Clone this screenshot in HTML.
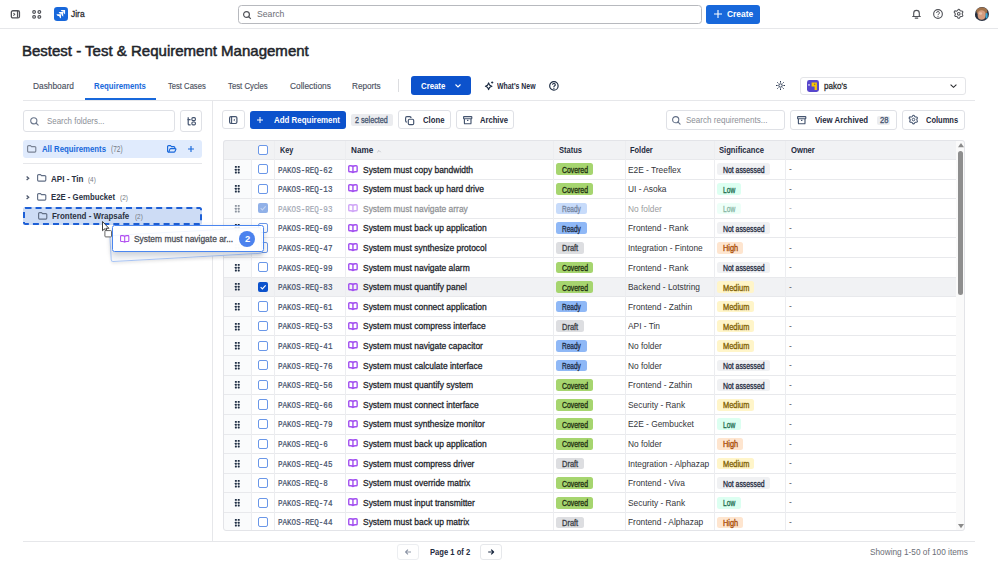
<!DOCTYPE html>
<html><head><meta charset="utf-8">
<style>
*{box-sizing:border-box;margin:0;padding:0}
html,body{width:998px;height:585px;overflow:hidden;background:#fff}
body{position:relative;font-family:"Liberation Sans",sans-serif;color:#292a2e}
.a{position:absolute}
.t{position:absolute;white-space:nowrap;line-height:1}
svg{position:absolute;overflow:visible}
.btn{position:absolute;border:1px solid #dfe1e6;border-radius:3px;background:#fff}
</style></head><body>
<div class="a" style="left:0;top:28px;width:998px;height:1px;background:#e6e7ea"></div>
<svg style="left:10px;top:10px" width="11" height="9" viewBox="0 0 11 9"><rect x="1.35" y=".75" width="8.1" height="7.2" rx="1.5" fill="none" stroke="#505258" stroke-width="1.3"/><path d="M7.5 1v6.7" stroke="#505258" stroke-width="1.15"/><path d="M3.4 3l1.35 1.35L3.4 5.7" fill="none" stroke="#505258" stroke-width="1.05"/></svg>
<svg style="left:32px;top:10px" width="9.5" height="9" viewBox="0 0 9.5 9"><g fill="none" stroke="#505258" stroke-width="1.2"><rect x=".75" y=".7" width="2.7" height="2.6" rx="1.2"/><rect x="6" y=".7" width="2.7" height="2.6" rx="1.2"/><rect x=".75" y="5.6" width="2.7" height="2.6" rx="1.2"/><rect x="6" y="5.6" width="2.7" height="2.6" rx="1.2"/></g></svg>
<svg style="left:53.7px;top:7.2px" width="14" height="14" viewBox="0 0 14 14"><rect width="14" height="14" rx="3.2" fill="#1868db"/><g fill="#fff"><path d="M6.6 2.9h4.5v4.6L9.4 5.8V4.6H7.9z"/><path d="M4.6 5.05h4.6v4.75L7.5 8.1V6.75H5.9z"/><path d="M2.4 7.2h4.6v4.4L5.3 9.9V8.9H3.7z"/></g></svg>
<div class="t" id="t0" style="left:71.30px;top:10.00px;font-size:9.2px;color:#292a2e;-webkit-text-stroke:0.28px #292a2e;transform:scaleX(0.9175);transform-origin:0.00px 0">Jira</div>
<div class="a" style="left:238px;top:5px;width:463.5px;height:18.5px;border:1px solid #b7b9be;border-radius:3.5px"></div>
<svg style="left:243px;top:10.5px" width="8.5" height="8" viewBox="0 0 8.5 8"><circle cx="3.5" cy="3.5" r="2.9" fill="none" stroke="#505258" stroke-width="1.2"/><path d="M5.6 5.6l2.2 2.2" stroke="#505258" stroke-width="1.2"/></svg>
<div class="t" id="t1" style="left:256.80px;top:10.00px;font-size:9.2px;color:#6b6e76;transform:scaleX(0.9414);transform-origin:0.00px 0">Search</div>
<div class="a" style="left:706px;top:4.5px;width:54px;height:19px;background:#1868db;border-radius:3px"></div>
<svg style="left:714px;top:10px" width="8" height="8" viewBox="0 0 8 8"><path d="M4 0v8M0 4h8" stroke="#fff" stroke-width="1.1"/></svg>
<div class="t" id="t2" style="left:727.00px;top:10.00px;font-size:9.2px;color:#fff;font-weight:bold;transform:scaleX(0.9126);transform-origin:0.00px 0">Create</div>
<svg style="left:912px;top:9px" width="9" height="10" viewBox="0 0 9 10"><path d="M.7 7.5h7.6M1.7 7.4V4.2a2.8 2.8 0 0 1 5.6 0v3.2M3.2 9.1h2.6" fill="none" stroke="#505258" stroke-width="1.15" stroke-linejoin="round" stroke-linecap="round"/></svg>
<svg style="left:932.5px;top:9px" width="10" height="10" viewBox="0 0 10 10"><circle cx="5" cy="5" r="4.35" fill="none" stroke="#505258" stroke-width="1.1"/><path d="M3.6 3.9a1.4 1.4 0 1 1 1.9 1.3c-.4.2-.5.4-.5.9" fill="none" stroke="#505258" stroke-width="1"/><circle cx="5" cy="7.3" r=".6" fill="#505258"/></svg>
<svg style="left:954px;top:9.4px" width="9.5" height="9.6" viewBox="0 0 9 9.2"><path d="M3.6.85a1 1 0 0 1 1.8 0l.35.6a1 1 0 0 0 .9.5h.7a1 1 0 0 1 .9 1.55l-.35.6a1 1 0 0 0 0 1l.35.6a1 1 0 0 1-.9 1.55h-.7a1 1 0 0 0-.9.5l-.35.6a1 1 0 0 1-1.8 0l-.35-.6a1 1 0 0 0-.9-.5h-.7A1 1 0 0 1 .75 6.1l.35-.6a1 1 0 0 0 0-1l-.35-.6A1 1 0 0 1 1.65 2h.7a1 1 0 0 0 .9-.5z" fill="none" stroke="#505258" stroke-width="1.05" stroke-linejoin="round"/><circle cx="4.5" cy="4.6" r="1.3" fill="none" stroke="#505258" stroke-width="1"/></svg>
<div class="a" style="left:974.7px;top:7px;width:14px;height:14px;border-radius:50%;overflow:hidden"><svg style="left:0;top:0" width="14" height="14" viewBox="0 0 14 14"><rect width="14" height="14" fill="#2b3242"/><ellipse cx="6.8" cy="4" rx="5.6" ry="3.8" fill="#a0724a"/><ellipse cx="6.6" cy="8" rx="4.2" ry="4.8" fill="#d49c7e"/><ellipse cx="5.6" cy="6.5" rx="1.6" ry="1.2" fill="#e8c0a8"/><rect x="10.6" y="6" width="2" height="5.5" rx="1" fill="#35a6d6"/><rect x="0" y="7" width="2.4" height="5" fill="#262c3a"/></svg></div>
<div class="t" id="t3" style="left:22.00px;top:44.00px;font-size:14.5px;color:#22252b;-webkit-text-stroke:0.28px #22252b;transform:scaleX(1.0354);transform-origin:1.00px 0;-webkit-text-stroke:0.5px #22252b">Bestest - Test &amp; Requirement Management</div>
<div class="a" style="left:23px;top:99.5px;width:952px;height:1px;background:#e6e7ea"></div>
<div class="t" id="t4" style="left:32.50px;top:81.00px;font-size:9.4px;color:#4b5160;transform:scaleX(0.8894);transform-origin:0.00px 0;-webkit-text-stroke:0.15px #4b5160">Dashboard</div>
<div class="t" id="t5" style="left:94.40px;top:82.00px;font-size:8.9px;color:#1868db;font-weight:bold;transform:scaleX(0.8777);transform-origin:0.00px 0">Requirements</div>
<div class="a" style="left:85px;top:98px;width:71px;height:2px;background:#1868db"></div>
<div class="t" id="t6" style="left:167.60px;top:81.00px;font-size:9.4px;color:#4b5160;transform:scaleX(0.8140);transform-origin:0.00px 0;-webkit-text-stroke:0.15px #4b5160">Test Cases</div>
<div class="t" id="t7" style="left:228.00px;top:81.00px;font-size:9.4px;color:#4b5160;transform:scaleX(0.8292);transform-origin:0.00px 0;-webkit-text-stroke:0.15px #4b5160">Test Cycles</div>
<div class="t" id="t8" style="left:289.60px;top:81.00px;font-size:9.4px;color:#4b5160;transform:scaleX(0.8924);transform-origin:0.00px 0;-webkit-text-stroke:0.15px #4b5160">Collections</div>
<div class="t" id="t9" style="left:352.40px;top:81.00px;font-size:9.4px;color:#4b5160;transform:scaleX(0.8751);transform-origin:0.00px 0;-webkit-text-stroke:0.15px #4b5160">Reports</div>
<div class="a" style="left:398px;top:79px;width:1px;height:13px;background:#dcdde0"></div>
<div class="a" style="left:411.2px;top:76px;width:59.8px;height:19px;background:#0c52cc;border-radius:3px"></div>
<div class="t" id="t10" style="left:420.80px;top:82.00px;font-size:9.2px;color:#fff;font-weight:bold;transform:scaleX(0.8494);transform-origin:0.00px 0">Create</div>
<svg style="left:455px;top:83.5px" width="6" height="4" viewBox="0 0 6 4"><path d="M.5.5L3 3 5.5.5" fill="none" stroke="#fff" stroke-width="1.1"/></svg>
<svg style="left:485px;top:81px" width="9" height="9" viewBox="0 0 9 9"><path d="M3.6 1.9Q4.1 4.7 6.9 5.3 4.1 5.9 3.6 8.6 3.1 5.9.4 5.3 3.1 4.7 3.6 1.9z" fill="none" stroke="#1c2b42" stroke-width="1.1" stroke-linejoin="round"/><path d="M7.2.4v2.2M6.1 1.5h2.2" stroke="#1c2b42" stroke-width=".9"/></svg>
<div class="t" id="t11" style="left:497.40px;top:82.00px;font-size:8.9px;color:#1f2b40;font-weight:bold;transform:scaleX(0.7791);transform-origin:0.00px 0">What&#x27;s New</div>
<svg style="left:549.3px;top:80.6px" width="9.8" height="9.8" viewBox="0 0 10 10"><circle cx="5" cy="5" r="4.3" fill="none" stroke="#1c2b42" stroke-width="1.2"/><path d="M3.6 3.9a1.4 1.4 0 1 1 1.9 1.3c-.4.2-.5.4-.5.9" fill="none" stroke="#1c2b42" stroke-width="1.1"/><circle cx="5" cy="7.4" r=".65" fill="#1c2b42"/></svg>
<svg style="left:775.8px;top:81.2px" width="9" height="9" viewBox="0 0 9 9"><circle cx="4.5" cy="4.5" r="1.7" fill="none" stroke="#2c3a52" stroke-width="1"/><path d="M4.5 0v1.6M4.5 7.4V9M0 4.5h1.6M7.4 4.5H9M1.3 1.3l1.1 1.1M6.6 6.6l1.1 1.1M1.3 7.7l1.1-1.1M6.6 2.4l1.1-1.1" stroke="#2c3a52" stroke-width="1"/></svg>
<div class="btn" style="left:799.6px;top:76.5px;width:166px;height:18.5px;border-color:#e4e5e8"></div>
<svg style="left:807.1px;top:79.6px" width="12" height="11.9" viewBox="0 0 12 11.9"><rect width="12" height="11.9" rx="2.4" fill="#5746cc"/><path d="M4.6 2.6h5.3v7.4H7.6V6.4h-3z" fill="#fbc500"/><circle cx="7.6" cy="4.4" r=".8" fill="#8a8040"/><ellipse cx="2" cy="4.9" rx="1" ry=".7" fill="#fff"/></svg>
<div class="t" id="t12" style="left:823.80px;top:81.00px;font-size:9.6px;color:#292a2e;-webkit-text-stroke:0.28px #292a2e;transform:scaleX(0.8395);transform-origin:0.00px 0">pako&#x27;s</div>
<svg style="left:950px;top:83.5px" width="7" height="4" viewBox="0 0 7 4"><path d="M.6.6L3.5 3.3 6.4.6" fill="none" stroke="#292a2e" stroke-width="1.1"/></svg>
<div class="a" style="left:212px;top:100px;width:1px;height:441px;background:#e6e7ea"></div>
<div class="btn" style="left:22.6px;top:110.4px;width:152.4px;height:22px"></div>
<svg style="left:30px;top:117px" width="9" height="9" viewBox="0 0 9 9"><circle cx="3.8" cy="3.8" r="3.1" fill="none" stroke="#6b778c" stroke-width="1.1"/><path d="M6 6l2.2 2.2" stroke="#6b778c" stroke-width="1.1" stroke-linecap="round"/></svg>
<div class="t" id="t13" style="left:47.00px;top:117.00px;font-size:9.2px;color:#8c8f97;transform:scaleX(0.8592);transform-origin:0.00px 0">Search folders...</div>
<div class="btn" style="left:180px;top:110.4px;width:22.4px;height:22px"></div>
<svg style="left:186.9px;top:117.1px" width="9" height="8.6" viewBox="0 0 9 8.6"><path d="M1.2 .3v6.6a1 1 0 0 0 1 1h1.4M.3 2.6h3.3" fill="none" stroke="#44546f" stroke-width="1.2"/><rect x="4.9" y=".7" width="3.5" height="2.9" rx="1.1" fill="none" stroke="#44546f" stroke-width="1.15"/><rect x="4.9" y="5" width="3.5" height="2.9" rx="1.1" fill="none" stroke="#44546f" stroke-width="1.15"/></svg>
<div class="a" style="left:22.6px;top:139.6px;width:179.8px;height:18.8px;background:#e0ebfd;border-radius:3px"></div>
<svg style="left:27.4px;top:145.1px" width="9.4" height="7.7" viewBox="0 0 9.4 7.7"><path d="M.6 1.6A1 1 0 0 1 1.6.6h1.9l1 1h3.3a1 1 0 0 1 1 1v3.5a1 1 0 0 1-1 1H1.6a1 1 0 0 1-1-1z" fill="none" stroke="#7a8496" stroke-width="1.15" stroke-linejoin="round"/></svg>
<svg style="left:167px;top:145px" width="9.4" height="7.8" viewBox="0 0 9.4 7.8"><path d="M1.6 7.2A1 1 0 0 1 .6 6.2V1.6a1 1 0 0 1 1-1h1.9l1 1h2.3a1 1 0 0 1 1 1v.6" fill="none" stroke="#1868db" stroke-width="1.15" stroke-linejoin="round"/><path d="M1.6 7.2l1.3-3.1a.8.8 0 0 1 .75-.5H8.3a.6.6 0 0 1 .55.85L7.8 6.7a.9.9 0 0 1-.8.5z" fill="none" stroke="#1868db" stroke-width="1.15" stroke-linejoin="round"/></svg>
<svg style="left:187.9px;top:146px" width="6" height="6" viewBox="0 0 6 6"><path d="M3 0v6M0 3h6" stroke="#1868db" stroke-width="1.15"/></svg>
<div class="t" id="t14" style="left:41.60px;top:145.00px;font-size:9.0px;color:#1868db;font-weight:bold;transform:scaleX(0.8647);transform-origin:0.00px 0">All Requirements</div>
<div class="t" id="t15" style="left:110.60px;top:146.00px;font-size:8.2px;color:#757983;transform:scaleX(0.7955);transform-origin:0.00px 0">(72)</div>
<div class="a" style="left:22.6px;top:163.2px;width:179.8px;height:1px;background:#e6e7ea"></div>
<svg style="left:26px;top:176.3px" width="3.2" height="4.6" viewBox="0 0 3.2 4.6"><path d="M.6.5l2.1 1.8-2.1 1.8" fill="none" stroke="#505a6e" stroke-width="1.3"/></svg>
<svg style="left:37px;top:174.3px" width="9.4" height="7.7" viewBox="0 0 9.4 7.7"><path d="M.6 1.6A1 1 0 0 1 1.6.6h1.9l1 1h3.3a1 1 0 0 1 1 1v3.5a1 1 0 0 1-1 1H1.6a1 1 0 0 1-1-1z" fill="none" stroke="#626f86" stroke-width="1.15" stroke-linejoin="round"/></svg>
<div class="t" id="t16" style="left:51.00px;top:175.00px;font-size:9.0px;color:#2a3142;font-weight:bold;transform:scaleX(0.8929);transform-origin:0.00px 0">API - Tin</div>
<div class="t" id="t17" style="left:88.00px;top:176.00px;font-size:8.0px;color:#757983;transform:scaleX(0.7910);transform-origin:0.00px 0">(4)</div>
<svg style="left:26px;top:195px" width="3.2" height="4.6" viewBox="0 0 3.2 4.6"><path d="M.6.5l2.1 1.8-2.1 1.8" fill="none" stroke="#505a6e" stroke-width="1.3"/></svg>
<svg style="left:37px;top:193.2px" width="9.4" height="7.7" viewBox="0 0 9.4 7.7"><path d="M.6 1.6A1 1 0 0 1 1.6.6h1.9l1 1h3.3a1 1 0 0 1 1 1v3.5a1 1 0 0 1-1 1H1.6a1 1 0 0 1-1-1z" fill="none" stroke="#626f86" stroke-width="1.15" stroke-linejoin="round"/></svg>
<div class="t" id="t18" style="left:51.00px;top:193.00px;font-size:9.0px;color:#2a3142;font-weight:bold;transform:scaleX(0.8645);transform-origin:0.00px 0">E2E - Gembucket</div>
<div class="t" id="t19" style="left:119.60px;top:194.00px;font-size:8.0px;color:#757983;transform:scaleX(0.8108);transform-origin:0.00px 0">(2)</div>
<div class="a" style="left:23px;top:207.4px;width:179.4px;height:17.6px;background:#cddcf5;border:2px dashed #1d5fd6;border-radius:2.5px"></div>
<svg style="left:38px;top:212.3px" width="9.4" height="7.7" viewBox="0 0 9.4 7.7"><path d="M.6 1.6A1 1 0 0 1 1.6.6h1.9l1 1h3.3a1 1 0 0 1 1 1v3.5a1 1 0 0 1-1 1H1.6a1 1 0 0 1-1-1z" fill="none" stroke="#626f86" stroke-width="1.15" stroke-linejoin="round"/></svg>
<div class="t" id="t20" style="left:52.40px;top:212.00px;font-size:9.0px;color:#2a3142;font-weight:bold;transform:scaleX(0.8839);transform-origin:0.00px 0">Frontend - Wrapsafe</div>
<div class="t" id="t21" style="left:134.60px;top:213.00px;font-size:8.0px;color:#757983;transform:scaleX(0.7910);transform-origin:0.00px 0">(2)</div>
<div class="btn" style="left:222.4px;top:110.4px;width:22.2px;height:19px"></div>
<svg style="left:229.3px;top:115.9px" width="8.5" height="8.1" viewBox="0 0 8.5 8.1"><rect x=".6" y=".6" width="7.3" height="6.9" rx="1.4" fill="none" stroke="#44546f" stroke-width="1.2"/><path d="M2.6 .8v6.5" stroke="#44546f" stroke-width="1.1"/><path d="M5.9 2.9L4.8 4.05 5.9 5.2" fill="none" stroke="#44546f" stroke-width=".9"/></svg>
<div class="a" style="left:249.6px;top:110.6px;width:96px;height:18.8px;background:#0c52cc;border-radius:3px"></div>
<svg style="left:257.3px;top:117px" width="6" height="6" viewBox="0 0 6 6"><path d="M3 0v6M0 3h6" stroke="#fff" stroke-width="1"/></svg>
<div class="t" id="t22" style="left:273.60px;top:116.00px;font-size:9.0px;color:#fff;font-weight:bold;transform:scaleX(0.8799);transform-origin:0.00px 0">Add Requirement</div>
<div class="a" style="left:350.6px;top:114px;width:42px;height:12.4px;background:#ebecef;border-radius:2px"></div>
<div class="t" id="t23" style="left:355.00px;top:116.00px;font-size:8.4px;color:#44546f;-webkit-text-stroke:0.28px #44546f;transform:scaleX(0.8567);transform-origin:0.00px 0;-webkit-text-stroke:0.3px #44546f">2 selected</div>
<div class="btn" style="left:398.4px;top:110.4px;width:52.2px;height:19px"></div>
<svg style="left:405px;top:115.5px" width="9.3" height="9.3" viewBox="0 0 9.3 9.3"><path d="M5.6 1.7V1.9M1.9 6.1A1.3 1.3 0 0 1 .6 4.8V1.9A1.3 1.3 0 0 1 1.9.6h2.9a1.3 1.3 0 0 1 1.3 1.3" fill="none" stroke="#44546f" stroke-width="1.15"/><rect x="3.3" y="3.3" width="5.4" height="5.4" rx="1.2" fill="none" stroke="#44546f" stroke-width="1.15"/></svg>
<div class="t" id="t24" style="left:422.60px;top:116.00px;font-size:8.8px;color:#1f2b40;font-weight:bold;transform:scaleX(0.8801);transform-origin:0.00px 0">Clone</div>
<div class="btn" style="left:456px;top:110.4px;width:58.4px;height:19px"></div>
<svg style="left:462.7px;top:116px" width="9.4" height="8.4" viewBox="0 0 9.4 8.4"><rect x=".6" y=".6" width="8.2" height="2.2" rx=".5" fill="none" stroke="#44546f" stroke-width="1.15"/><path d="M1.4 2.9v4.3a.6.6 0 0 0 .6.6h5.4a.6.6 0 0 0 .6-.6V2.9M4 4.4h1.4" fill="none" stroke="#44546f" stroke-width="1.15"/></svg>
<div class="t" id="t25" style="left:480.00px;top:116.00px;font-size:8.8px;color:#1f2b40;font-weight:bold;transform:scaleX(0.8648);transform-origin:0.00px 0">Archive</div>
<div class="btn" style="left:666.4px;top:110.4px;width:119px;height:19.2px"></div>
<svg style="left:671.5px;top:115.8px" width="8.6" height="8.6" viewBox="0 0 8.6 8.6"><circle cx="3.7" cy="3.7" r="3.1" fill="none" stroke="#626f86" stroke-width="1.1"/><path d="M5.9 5.9l2.2 2.2" stroke="#626f86" stroke-width="1.1" stroke-linecap="round"/></svg>
<div class="t" id="t26" style="left:686.00px;top:116.00px;font-size:9.0px;color:#8c8f97;transform:scaleX(0.8946);transform-origin:0.00px 0">Search requirements...</div>
<div class="btn" style="left:790.4px;top:110.4px;width:106.6px;height:19.2px"></div>
<svg style="left:797px;top:116px" width="9.4" height="8.4" viewBox="0 0 9.4 8.4"><rect x=".6" y=".6" width="8.2" height="2.2" rx=".5" fill="none" stroke="#44546f" stroke-width="1.15"/><path d="M1.4 2.9v4.3a.6.6 0 0 0 .6.6h5.4a.6.6 0 0 0 .6-.6V2.9M4 4.4h1.4" fill="none" stroke="#44546f" stroke-width="1.15"/></svg>
<div class="t" id="t27" style="left:815.00px;top:116.00px;font-size:8.8px;color:#1f2b40;font-weight:bold;transform:scaleX(0.8892);transform-origin:0.00px 0">View Archived</div>
<div class="a" style="left:877px;top:116px;width:13.4px;height:9px;background:#ebecef;border-radius:2px"></div>
<div class="t" id="t28" style="left:879.50px;top:116.00px;font-size:8.4px;color:#44546f;-webkit-text-stroke:0.28px #44546f;transform:scaleX(0.9112);transform-origin:0.00px 0;-webkit-text-stroke:0.3px #44546f">28</div>
<div class="btn" style="left:902.4px;top:110.4px;width:63px;height:19.2px"></div>
<svg style="left:909px;top:115.4px" width="9" height="9.2" viewBox="0 0 9 9.2"><path d="M4.5.6l1.5.9h1.8l.9 1.55.9 1.55-.9 1.55-.9 1.55H6L4.5 8.6 3 7.7H1.2L.3 6.15-.6 4.6" fill="none"/><path d="M3.6.85a1 1 0 0 1 1.8 0l.35.6a1 1 0 0 0 .9.5h.7a1 1 0 0 1 .9 1.55l-.35.6a1 1 0 0 0 0 1l.35.6a1 1 0 0 1-.9 1.55h-.7a1 1 0 0 0-.9.5l-.35.6a1 1 0 0 1-1.8 0l-.35-.6a1 1 0 0 0-.9-.5h-.7A1 1 0 0 1 .75 6.1l.35-.6a1 1 0 0 0 0-1l-.35-.6A1 1 0 0 1 1.65 2h.7a1 1 0 0 0 .9-.5z" fill="none" stroke="#44546f" stroke-width="1.1" stroke-linejoin="round"/><circle cx="4.5" cy="4.6" r="1.3" fill="none" stroke="#44546f" stroke-width="1"/></svg>
<div class="t" id="t29" style="left:926.40px;top:116.00px;font-size:8.8px;color:#1f2b40;font-weight:bold;transform:scaleX(0.8532);transform-origin:0.00px 0">Columns</div>
<div class="a" style="left:222.5px;top:140.2px;width:742.6px;height:391.09999999999997px;border-radius:3px;overflow:hidden;background:#fff"><div class="a" style="left:0;top:0;width:733.7px;height:19.200000000000017px;background:#f1f2f4"></div><div class="a" style="left:733.7px;top:0;width:8.899999999999977px;height:391.09999999999997px;background:#fafafa"></div></div>
<div class="a" style="left:223.5px;top:159.4px;width:27.80000000000001px;height:370.9px;background:#fafbfc"></div>
<div class="a" style="left:223.5px;top:277.12px;width:732.7px;height:19.62px;background:#f1f2f4"></div>
<div class="a" style="left:222.5px;top:158.90px;width:733.7px;height:1px;background:#e8e9ec"></div>
<div class="a" style="left:222.5px;top:178.52px;width:733.7px;height:1px;background:#e8e9ec"></div>
<div class="a" style="left:222.5px;top:198.14px;width:733.7px;height:1px;background:#e8e9ec"></div>
<div class="a" style="left:222.5px;top:217.76px;width:733.7px;height:1px;background:#e8e9ec"></div>
<div class="a" style="left:222.5px;top:237.38px;width:733.7px;height:1px;background:#e8e9ec"></div>
<div class="a" style="left:222.5px;top:257.00px;width:733.7px;height:1px;background:#e8e9ec"></div>
<div class="a" style="left:222.5px;top:276.62px;width:733.7px;height:1px;background:#e8e9ec"></div>
<div class="a" style="left:222.5px;top:296.24px;width:733.7px;height:1px;background:#e8e9ec"></div>
<div class="a" style="left:222.5px;top:315.86px;width:733.7px;height:1px;background:#e8e9ec"></div>
<div class="a" style="left:222.5px;top:335.48px;width:733.7px;height:1px;background:#e8e9ec"></div>
<div class="a" style="left:222.5px;top:355.10px;width:733.7px;height:1px;background:#e8e9ec"></div>
<div class="a" style="left:222.5px;top:374.72px;width:733.7px;height:1px;background:#e8e9ec"></div>
<div class="a" style="left:222.5px;top:394.34px;width:733.7px;height:1px;background:#e8e9ec"></div>
<div class="a" style="left:222.5px;top:413.96px;width:733.7px;height:1px;background:#e8e9ec"></div>
<div class="a" style="left:222.5px;top:433.58px;width:733.7px;height:1px;background:#e8e9ec"></div>
<div class="a" style="left:222.5px;top:453.20px;width:733.7px;height:1px;background:#e8e9ec"></div>
<div class="a" style="left:222.5px;top:472.82px;width:733.7px;height:1px;background:#e8e9ec"></div>
<div class="a" style="left:222.5px;top:492.44px;width:733.7px;height:1px;background:#e8e9ec"></div>
<div class="a" style="left:222.5px;top:512.06px;width:733.7px;height:1px;background:#e8e9ec"></div>
<div class="a" style="left:250.80px;top:159.4px;width:1px;height:371.9px;background:#ecedf0"></div>
<div class="a" style="left:273.90px;top:140.2px;width:1px;height:391.09999999999997px;background:#ecedf0"></div>
<div class="a" style="left:345.10px;top:140.2px;width:1px;height:391.09999999999997px;background:#ecedf0"></div>
<div class="a" style="left:552.80px;top:140.2px;width:1px;height:391.09999999999997px;background:#ecedf0"></div>
<div class="a" style="left:624.90px;top:140.2px;width:1px;height:391.09999999999997px;background:#ecedf0"></div>
<div class="a" style="left:714.20px;top:140.2px;width:1px;height:391.09999999999997px;background:#ecedf0"></div>
<div class="a" style="left:785.10px;top:140.2px;width:1px;height:391.09999999999997px;background:#ecedf0"></div>
<div class="a" style="left:222.5px;top:140.2px;width:742.6px;height:391.09999999999997px;border:1px solid #e3e4e8;border-radius:3px"></div>
<div class="a" style="left:258.1px;top:144.70px;width:10.2px;height:10.2px;border:1.25px solid #6a97e8;border-radius:2px;background:#fff"></div>
<div class="t" id="t30" style="left:280.20px;top:146.00px;font-size:8.6px;color:#1f2b40;font-weight:bold;transform:scaleX(0.8445);transform-origin:0.00px 0">Key</div>
<div class="t" id="t31" style="left:350.80px;top:146.00px;font-size:8.6px;color:#1f2b40;font-weight:bold;transform:scaleX(0.9481);transform-origin:0.00px 0">Name</div>
<svg style="left:377.2px;top:149.5px" width="4" height="2.5" viewBox="0 0 4 2.5"><path d="M.3 2.2L2 .5l1.7 1.7" fill="none" stroke="#b5b8be" stroke-width=".8"/></svg>
<div class="t" id="t32" style="left:558.70px;top:146.00px;font-size:8.6px;color:#1f2b40;font-weight:bold;transform:scaleX(0.8760);transform-origin:0.00px 0">Status</div>
<div class="t" id="t33" style="left:630.30px;top:146.00px;font-size:8.6px;color:#1f2b40;font-weight:bold;transform:scaleX(0.8657);transform-origin:0.00px 0">Folder</div>
<div class="t" id="t34" style="left:719.40px;top:146.00px;font-size:8.6px;color:#1f2b40;font-weight:bold;transform:scaleX(0.8870);transform-origin:0.00px 0">Significance</div>
<div class="t" id="t35" style="left:790.80px;top:146.00px;font-size:8.6px;color:#1f2b40;font-weight:bold;transform:scaleX(0.8906);transform-origin:0.00px 0">Owner</div>
<svg style="left:234.9px;top:165.60px" width="4.6" height="7.4" viewBox="0 0 4.6 7.4"><g fill="#1c2b41"><rect x="-.1" y="-.1" width="1.95" height="1.95" rx=".45"/><rect x="2.75" y="-.1" width="1.95" height="1.95" rx=".45"/><rect x="-.1" y="2.72" width="1.95" height="1.95" rx=".45"/><rect x="2.75" y="2.72" width="1.95" height="1.95" rx=".45"/><rect x="-.1" y="5.55" width="1.95" height="1.95" rx=".45"/><rect x="2.75" y="5.55" width="1.95" height="1.95" rx=".45"/></g></svg>
<div class="a" style="left:258.1px;top:164.00px;width:10.2px;height:10.2px;border:1.25px solid #6a97e8;border-radius:2px;background:#fff"></div>
<div class="t" id="t36" style="left:278.00px;top:167.00px;font-size:9.0px;color:#44506a;font-family:'Liberation Mono',monospace;transform:scaleX(0.8399);transform-origin:0.00px 0;-webkit-text-stroke:0.22px #44506a">PAKOS-REQ-62</div>
<svg style="left:348.1px;top:164.80px" width="9.9" height="8" viewBox="0 0 9.9 8"><path d="M4.95 1.5C4.5.95 3.8.75 2.8.75H1.7A.95.95 0 0 0 .75 1.7v4.2c0 .5.4.9.95.9h1.1c1 0 1.7.2 2.15.75.45-.55 1.15-.75 2.15-.75h1.1c.55 0 .95-.4.95-.9V1.7A.95.95 0 0 0 8.2.75H7.1C6.1.75 5.4.95 4.95 1.5zM4.95 1.5v6" fill="none" stroke="#a24ff0" stroke-width="1.4" stroke-linejoin="round"/></svg>
<div class="t" id="t37" style="left:362.90px;top:166.00px;font-size:9.0px;color:#22252b;-webkit-text-stroke:0.28px #22252b;transform:scaleX(0.9400);transform-origin:0.00px 0">System must copy bandwidth</div>
<div class="a" style="left:556.4px;top:163.40px;width:37.10px;height:11.7px;background:#a6d56f;border-radius:2.5px"></div>
<div class="t" id="t38" style="left:561.80px;top:166.00px;font-size:8.4px;color:#1d2e10;-webkit-text-stroke:0.28px #1d2e10;transform:scaleX(0.8219);transform-origin:0.00px 0;-webkit-text-stroke:0.3px #1d2e10">Covered</div>
<div class="t" id="t39" style="left:627.80px;top:165.00px;font-size:9.6px;color:#33353a;transform:scaleX(0.8700);transform-origin:0.00px 0">E2E - Treeflex</div>
<div class="a" style="left:717.1px;top:163.40px;width:52.50px;height:11.7px;background:#f0f1f3;border-radius:2.5px"></div>
<div class="t" id="t40" style="left:722.50px;top:166.00px;font-size:8.4px;color:#1f2b40;-webkit-text-stroke:0.28px #1f2b40;transform:scaleX(0.8202);transform-origin:0.00px 0;-webkit-text-stroke:0.3px #1f2b40">Not assessed</div>
<div class="t" id="t41" style="left:789.00px;top:165.00px;font-size:8.4px;color:#505258">-</div>
<svg style="left:234.9px;top:185.22px" width="4.6" height="7.4" viewBox="0 0 4.6 7.4"><g fill="#1c2b41"><rect x="-.1" y="-.1" width="1.95" height="1.95" rx=".45"/><rect x="2.75" y="-.1" width="1.95" height="1.95" rx=".45"/><rect x="-.1" y="2.72" width="1.95" height="1.95" rx=".45"/><rect x="2.75" y="2.72" width="1.95" height="1.95" rx=".45"/><rect x="-.1" y="5.55" width="1.95" height="1.95" rx=".45"/><rect x="2.75" y="5.55" width="1.95" height="1.95" rx=".45"/></g></svg>
<div class="a" style="left:258.1px;top:183.62px;width:10.2px;height:10.2px;border:1.25px solid #6a97e8;border-radius:2px;background:#fff"></div>
<div class="t" id="t42" style="left:278.00px;top:186.00px;font-size:9.0px;color:#44506a;font-family:'Liberation Mono',monospace;transform:scaleX(0.8399);transform-origin:0.00px 0;-webkit-text-stroke:0.22px #44506a">PAKOS-REQ-13</div>
<svg style="left:348.1px;top:184.42px" width="9.9" height="8" viewBox="0 0 9.9 8"><path d="M4.95 1.5C4.5.95 3.8.75 2.8.75H1.7A.95.95 0 0 0 .75 1.7v4.2c0 .5.4.9.95.9h1.1c1 0 1.7.2 2.15.75.45-.55 1.15-.75 2.15-.75h1.1c.55 0 .95-.4.95-.9V1.7A.95.95 0 0 0 8.2.75H7.1C6.1.75 5.4.95 4.95 1.5zM4.95 1.5v6" fill="none" stroke="#a24ff0" stroke-width="1.4" stroke-linejoin="round"/></svg>
<div class="t" id="t43" style="left:362.90px;top:185.00px;font-size:9.0px;color:#22252b;-webkit-text-stroke:0.28px #22252b;transform:scaleX(0.9400);transform-origin:0.00px 0">System must back up hard drive</div>
<div class="a" style="left:556.4px;top:183.02px;width:37.10px;height:11.7px;background:#a6d56f;border-radius:2.5px"></div>
<div class="t" id="t44" style="left:561.80px;top:186.00px;font-size:8.4px;color:#1d2e10;-webkit-text-stroke:0.28px #1d2e10;transform:scaleX(0.8219);transform-origin:0.00px 0;-webkit-text-stroke:0.3px #1d2e10">Covered</div>
<div class="t" id="t45" style="left:627.80px;top:184.00px;font-size:9.6px;color:#33353a;transform:scaleX(0.8700);transform-origin:0.00px 0">UI - Asoka</div>
<div class="a" style="left:717.1px;top:183.02px;width:23.60px;height:11.7px;background:#dcfff1;border-radius:2.5px"></div>
<div class="t" id="t46" style="left:722.50px;top:186.00px;font-size:8.4px;color:#216e4e;-webkit-text-stroke:0.28px #216e4e;transform:scaleX(0.7968);transform-origin:0.00px 0;-webkit-text-stroke:0.3px #216e4e">Low</div>
<div class="t" id="t47" style="left:789.00px;top:185.00px;font-size:8.4px;color:#505258">-</div>
<svg style="left:234.9px;top:204.84px;opacity:0.5" width="4.6" height="7.4" viewBox="0 0 4.6 7.4"><g fill="#1c2b41"><rect x="-.1" y="-.1" width="1.95" height="1.95" rx=".45"/><rect x="2.75" y="-.1" width="1.95" height="1.95" rx=".45"/><rect x="-.1" y="2.72" width="1.95" height="1.95" rx=".45"/><rect x="2.75" y="2.72" width="1.95" height="1.95" rx=".45"/><rect x="-.1" y="5.55" width="1.95" height="1.95" rx=".45"/><rect x="2.75" y="5.55" width="1.95" height="1.95" rx=".45"/></g></svg>
<div class="a" style="left:258.1px;top:203.24px;width:10.2px;height:10.2px;border-radius:2px;background:#0c52cc;opacity:0.45"></div>
<svg style="left:258.1px;top:203.24px;opacity:0.45" width="10.2" height="10.2" viewBox="0 0 10 10"><path d="M2.6 5.1l1.7 1.7 3.2-3.4" fill="none" stroke="#fff" stroke-width="1.1"/></svg>
<div class="t" id="t48" style="left:278.00px;top:206.00px;font-size:9.0px;color:#44506a;font-family:'Liberation Mono',monospace;transform:scaleX(0.8399);transform-origin:0.00px 0;opacity:0.5;-webkit-text-stroke:0.22px #44506a">PAKOS-REQ-93</div>
<svg style="left:348.1px;top:204.04px;opacity:0.5" width="9.9" height="8" viewBox="0 0 9.9 8"><path d="M4.95 1.5C4.5.95 3.8.75 2.8.75H1.7A.95.95 0 0 0 .75 1.7v4.2c0 .5.4.9.95.9h1.1c1 0 1.7.2 2.15.75.45-.55 1.15-.75 2.15-.75h1.1c.55 0 .95-.4.95-.9V1.7A.95.95 0 0 0 8.2.75H7.1C6.1.75 5.4.95 4.95 1.5zM4.95 1.5v6" fill="none" stroke="#a24ff0" stroke-width="1.4" stroke-linejoin="round"/></svg>
<div class="t" id="t49" style="left:362.90px;top:205.00px;font-size:9.0px;color:#22252b;-webkit-text-stroke:0.28px #22252b;transform:scaleX(0.9400);transform-origin:0.00px 0;opacity:0.5">System must navigate array</div>
<div class="a" style="left:556.4px;top:202.64px;width:30.20px;height:11.7px;background:#8fb8f6;border-radius:2.5px;opacity:0.5"></div>
<div class="t" id="t50" style="left:561.80px;top:205.00px;font-size:8.4px;color:#1c2b42;-webkit-text-stroke:0.28px #1c2b42;transform:scaleX(0.7753);transform-origin:0.00px 0;opacity:0.5;-webkit-text-stroke:0.3px #1c2b42">Ready</div>
<div class="t" id="t51" style="left:627.80px;top:204.00px;font-size:9.6px;color:#33353a;transform:scaleX(0.8700);transform-origin:0.00px 0;opacity:0.5">No folder</div>
<div class="a" style="left:717.1px;top:202.64px;width:23.60px;height:11.7px;background:#dcfff1;border-radius:2.5px;opacity:0.5"></div>
<div class="t" id="t52" style="left:722.50px;top:205.00px;font-size:8.4px;color:#216e4e;-webkit-text-stroke:0.28px #216e4e;transform:scaleX(0.7968);transform-origin:0.00px 0;opacity:0.5;-webkit-text-stroke:0.3px #216e4e">Low</div>
<div class="t" id="t53" style="left:789.00px;top:204.00px;font-size:8.4px;color:#505258;opacity:0.5">-</div>
<svg style="left:234.9px;top:224.46px" width="4.6" height="7.4" viewBox="0 0 4.6 7.4"><g fill="#1c2b41"><rect x="-.1" y="-.1" width="1.95" height="1.95" rx=".45"/><rect x="2.75" y="-.1" width="1.95" height="1.95" rx=".45"/><rect x="-.1" y="2.72" width="1.95" height="1.95" rx=".45"/><rect x="2.75" y="2.72" width="1.95" height="1.95" rx=".45"/><rect x="-.1" y="5.55" width="1.95" height="1.95" rx=".45"/><rect x="2.75" y="5.55" width="1.95" height="1.95" rx=".45"/></g></svg>
<div class="a" style="left:258.1px;top:222.86px;width:10.2px;height:10.2px;border:1.25px solid #6a97e8;border-radius:2px;background:#fff"></div>
<div class="t" id="t54" style="left:278.00px;top:225.00px;font-size:9.0px;color:#44506a;font-family:'Liberation Mono',monospace;transform:scaleX(0.8399);transform-origin:0.00px 0;-webkit-text-stroke:0.22px #44506a">PAKOS-REQ-69</div>
<svg style="left:348.1px;top:223.66px" width="9.9" height="8" viewBox="0 0 9.9 8"><path d="M4.95 1.5C4.5.95 3.8.75 2.8.75H1.7A.95.95 0 0 0 .75 1.7v4.2c0 .5.4.9.95.9h1.1c1 0 1.7.2 2.15.75.45-.55 1.15-.75 2.15-.75h1.1c.55 0 .95-.4.95-.9V1.7A.95.95 0 0 0 8.2.75H7.1C6.1.75 5.4.95 4.95 1.5zM4.95 1.5v6" fill="none" stroke="#a24ff0" stroke-width="1.4" stroke-linejoin="round"/></svg>
<div class="t" id="t55" style="left:362.90px;top:224.00px;font-size:9.0px;color:#22252b;-webkit-text-stroke:0.28px #22252b;transform:scaleX(0.9400);transform-origin:0.00px 0">System must back up application</div>
<div class="a" style="left:556.4px;top:222.26px;width:30.20px;height:11.7px;background:#8fb8f6;border-radius:2.5px"></div>
<div class="t" id="t56" style="left:561.80px;top:225.00px;font-size:8.4px;color:#1c2b42;-webkit-text-stroke:0.28px #1c2b42;transform:scaleX(0.7753);transform-origin:0.00px 0;-webkit-text-stroke:0.3px #1c2b42">Ready</div>
<div class="t" id="t57" style="left:627.80px;top:223.00px;font-size:9.6px;color:#33353a;transform:scaleX(0.8700);transform-origin:0.00px 0">Frontend - Rank</div>
<div class="a" style="left:717.1px;top:222.26px;width:52.50px;height:11.7px;background:#f0f1f3;border-radius:2.5px"></div>
<div class="t" id="t58" style="left:722.50px;top:225.00px;font-size:8.4px;color:#1f2b40;-webkit-text-stroke:0.28px #1f2b40;transform:scaleX(0.8202);transform-origin:0.00px 0;-webkit-text-stroke:0.3px #1f2b40">Not assessed</div>
<div class="t" id="t59" style="left:789.00px;top:224.00px;font-size:8.4px;color:#505258">-</div>
<svg style="left:234.9px;top:244.08px" width="4.6" height="7.4" viewBox="0 0 4.6 7.4"><g fill="#1c2b41"><rect x="-.1" y="-.1" width="1.95" height="1.95" rx=".45"/><rect x="2.75" y="-.1" width="1.95" height="1.95" rx=".45"/><rect x="-.1" y="2.72" width="1.95" height="1.95" rx=".45"/><rect x="2.75" y="2.72" width="1.95" height="1.95" rx=".45"/><rect x="-.1" y="5.55" width="1.95" height="1.95" rx=".45"/><rect x="2.75" y="5.55" width="1.95" height="1.95" rx=".45"/></g></svg>
<div class="a" style="left:258.1px;top:242.48px;width:10.2px;height:10.2px;border:1.25px solid #6a97e8;border-radius:2px;background:#fff"></div>
<div class="t" id="t60" style="left:278.00px;top:245.00px;font-size:9.0px;color:#44506a;font-family:'Liberation Mono',monospace;transform:scaleX(0.8399);transform-origin:0.00px 0;-webkit-text-stroke:0.22px #44506a">PAKOS-REQ-47</div>
<svg style="left:348.1px;top:243.28px" width="9.9" height="8" viewBox="0 0 9.9 8"><path d="M4.95 1.5C4.5.95 3.8.75 2.8.75H1.7A.95.95 0 0 0 .75 1.7v4.2c0 .5.4.9.95.9h1.1c1 0 1.7.2 2.15.75.45-.55 1.15-.75 2.15-.75h1.1c.55 0 .95-.4.95-.9V1.7A.95.95 0 0 0 8.2.75H7.1C6.1.75 5.4.95 4.95 1.5zM4.95 1.5v6" fill="none" stroke="#a24ff0" stroke-width="1.4" stroke-linejoin="round"/></svg>
<div class="t" id="t61" style="left:362.90px;top:244.00px;font-size:9.0px;color:#22252b;-webkit-text-stroke:0.28px #22252b;transform:scaleX(0.9400);transform-origin:0.00px 0">System must synthesize protocol</div>
<div class="a" style="left:556.4px;top:241.88px;width:27.60px;height:11.7px;background:#dddee1;border-radius:2.5px"></div>
<div class="t" id="t62" style="left:561.80px;top:244.00px;font-size:8.4px;color:#3b3e45;-webkit-text-stroke:0.28px #3b3e45;transform:scaleX(0.8926);transform-origin:0.00px 0;-webkit-text-stroke:0.3px #3b3e45">Draft</div>
<div class="t" id="t63" style="left:627.80px;top:243.00px;font-size:9.6px;color:#33353a;transform:scaleX(0.8700);transform-origin:0.00px 0">Integration - Fintone</div>
<div class="a" style="left:717.1px;top:241.88px;width:26.00px;height:11.7px;background:#fee5cf;border-radius:2.5px"></div>
<div class="t" id="t64" style="left:722.50px;top:244.00px;font-size:8.4px;color:#a54800;-webkit-text-stroke:0.28px #a54800;transform:scaleX(0.8767);transform-origin:0.00px 0;-webkit-text-stroke:0.3px #a54800">High</div>
<div class="t" id="t65" style="left:789.00px;top:244.00px;font-size:8.4px;color:#505258">-</div>
<svg style="left:234.9px;top:263.70px" width="4.6" height="7.4" viewBox="0 0 4.6 7.4"><g fill="#1c2b41"><rect x="-.1" y="-.1" width="1.95" height="1.95" rx=".45"/><rect x="2.75" y="-.1" width="1.95" height="1.95" rx=".45"/><rect x="-.1" y="2.72" width="1.95" height="1.95" rx=".45"/><rect x="2.75" y="2.72" width="1.95" height="1.95" rx=".45"/><rect x="-.1" y="5.55" width="1.95" height="1.95" rx=".45"/><rect x="2.75" y="5.55" width="1.95" height="1.95" rx=".45"/></g></svg>
<div class="a" style="left:258.1px;top:262.10px;width:10.2px;height:10.2px;border:1.25px solid #6a97e8;border-radius:2px;background:#fff"></div>
<div class="t" id="t66" style="left:278.00px;top:265.00px;font-size:9.0px;color:#44506a;font-family:'Liberation Mono',monospace;transform:scaleX(0.8399);transform-origin:0.00px 0;-webkit-text-stroke:0.22px #44506a">PAKOS-REQ-99</div>
<svg style="left:348.1px;top:262.90px" width="9.9" height="8" viewBox="0 0 9.9 8"><path d="M4.95 1.5C4.5.95 3.8.75 2.8.75H1.7A.95.95 0 0 0 .75 1.7v4.2c0 .5.4.9.95.9h1.1c1 0 1.7.2 2.15.75.45-.55 1.15-.75 2.15-.75h1.1c.55 0 .95-.4.95-.9V1.7A.95.95 0 0 0 8.2.75H7.1C6.1.75 5.4.95 4.95 1.5zM4.95 1.5v6" fill="none" stroke="#a24ff0" stroke-width="1.4" stroke-linejoin="round"/></svg>
<div class="t" id="t67" style="left:362.90px;top:264.00px;font-size:9.0px;color:#22252b;-webkit-text-stroke:0.28px #22252b;transform:scaleX(0.9400);transform-origin:0.00px 0">System must navigate alarm</div>
<div class="a" style="left:556.4px;top:261.50px;width:37.10px;height:11.7px;background:#a6d56f;border-radius:2.5px"></div>
<div class="t" id="t68" style="left:561.80px;top:264.00px;font-size:8.4px;color:#1d2e10;-webkit-text-stroke:0.28px #1d2e10;transform:scaleX(0.8219);transform-origin:0.00px 0;-webkit-text-stroke:0.3px #1d2e10">Covered</div>
<div class="t" id="t69" style="left:627.80px;top:263.00px;font-size:9.6px;color:#33353a;transform:scaleX(0.8700);transform-origin:0.00px 0">Frontend - Rank</div>
<div class="a" style="left:717.1px;top:261.50px;width:52.50px;height:11.7px;background:#f0f1f3;border-radius:2.5px"></div>
<div class="t" id="t70" style="left:722.50px;top:264.00px;font-size:8.4px;color:#1f2b40;-webkit-text-stroke:0.28px #1f2b40;transform:scaleX(0.8202);transform-origin:0.00px 0;-webkit-text-stroke:0.3px #1f2b40">Not assessed</div>
<div class="t" id="t71" style="left:789.00px;top:263.00px;font-size:8.4px;color:#505258">-</div>
<svg style="left:234.9px;top:283.32px" width="4.6" height="7.4" viewBox="0 0 4.6 7.4"><g fill="#1c2b41"><rect x="-.1" y="-.1" width="1.95" height="1.95" rx=".45"/><rect x="2.75" y="-.1" width="1.95" height="1.95" rx=".45"/><rect x="-.1" y="2.72" width="1.95" height="1.95" rx=".45"/><rect x="2.75" y="2.72" width="1.95" height="1.95" rx=".45"/><rect x="-.1" y="5.55" width="1.95" height="1.95" rx=".45"/><rect x="2.75" y="5.55" width="1.95" height="1.95" rx=".45"/></g></svg>
<div class="a" style="left:258.1px;top:281.72px;width:10.2px;height:10.2px;border-radius:2px;background:#0c52cc"></div>
<svg style="left:258.1px;top:281.72px" width="10.2" height="10.2" viewBox="0 0 10 10"><path d="M2.6 5.1l1.7 1.7 3.2-3.4" fill="none" stroke="#fff" stroke-width="1.1"/></svg>
<div class="t" id="t72" style="left:278.00px;top:284.00px;font-size:9.0px;color:#44506a;font-family:'Liberation Mono',monospace;transform:scaleX(0.8399);transform-origin:0.00px 0;-webkit-text-stroke:0.22px #44506a">PAKOS-REQ-83</div>
<svg style="left:348.1px;top:282.52px" width="9.9" height="8" viewBox="0 0 9.9 8"><path d="M4.95 1.5C4.5.95 3.8.75 2.8.75H1.7A.95.95 0 0 0 .75 1.7v4.2c0 .5.4.9.95.9h1.1c1 0 1.7.2 2.15.75.45-.55 1.15-.75 2.15-.75h1.1c.55 0 .95-.4.95-.9V1.7A.95.95 0 0 0 8.2.75H7.1C6.1.75 5.4.95 4.95 1.5zM4.95 1.5v6" fill="none" stroke="#a24ff0" stroke-width="1.4" stroke-linejoin="round"/></svg>
<div class="t" id="t73" style="left:362.90px;top:283.00px;font-size:9.0px;color:#22252b;-webkit-text-stroke:0.28px #22252b;transform:scaleX(0.9400);transform-origin:0.00px 0">System must quantify panel</div>
<div class="a" style="left:556.4px;top:281.12px;width:37.10px;height:11.7px;background:#a6d56f;border-radius:2.5px"></div>
<div class="t" id="t74" style="left:561.80px;top:284.00px;font-size:8.4px;color:#1d2e10;-webkit-text-stroke:0.28px #1d2e10;transform:scaleX(0.8219);transform-origin:0.00px 0;-webkit-text-stroke:0.3px #1d2e10">Covered</div>
<div class="t" id="t75" style="left:627.80px;top:282.00px;font-size:9.6px;color:#33353a;transform:scaleX(0.8700);transform-origin:0.00px 0">Backend - Lotstring</div>
<div class="a" style="left:717.1px;top:281.12px;width:37.00px;height:11.7px;background:#fff5c9;border-radius:2.5px"></div>
<div class="t" id="t76" style="left:722.50px;top:284.00px;font-size:8.4px;color:#7f5f01;-webkit-text-stroke:0.28px #7f5f01;transform:scaleX(0.8856);transform-origin:0.00px 0;-webkit-text-stroke:0.3px #7f5f01">Medium</div>
<div class="t" id="t77" style="left:789.00px;top:283.00px;font-size:8.4px;color:#505258">-</div>
<svg style="left:234.9px;top:302.94px" width="4.6" height="7.4" viewBox="0 0 4.6 7.4"><g fill="#1c2b41"><rect x="-.1" y="-.1" width="1.95" height="1.95" rx=".45"/><rect x="2.75" y="-.1" width="1.95" height="1.95" rx=".45"/><rect x="-.1" y="2.72" width="1.95" height="1.95" rx=".45"/><rect x="2.75" y="2.72" width="1.95" height="1.95" rx=".45"/><rect x="-.1" y="5.55" width="1.95" height="1.95" rx=".45"/><rect x="2.75" y="5.55" width="1.95" height="1.95" rx=".45"/></g></svg>
<div class="a" style="left:258.1px;top:301.34px;width:10.2px;height:10.2px;border:1.25px solid #6a97e8;border-radius:2px;background:#fff"></div>
<div class="t" id="t78" style="left:278.00px;top:304.00px;font-size:9.0px;color:#44506a;font-family:'Liberation Mono',monospace;transform:scaleX(0.8399);transform-origin:0.00px 0;-webkit-text-stroke:0.22px #44506a">PAKOS-REQ-61</div>
<svg style="left:348.1px;top:302.14px" width="9.9" height="8" viewBox="0 0 9.9 8"><path d="M4.95 1.5C4.5.95 3.8.75 2.8.75H1.7A.95.95 0 0 0 .75 1.7v4.2c0 .5.4.9.95.9h1.1c1 0 1.7.2 2.15.75.45-.55 1.15-.75 2.15-.75h1.1c.55 0 .95-.4.95-.9V1.7A.95.95 0 0 0 8.2.75H7.1C6.1.75 5.4.95 4.95 1.5zM4.95 1.5v6" fill="none" stroke="#a24ff0" stroke-width="1.4" stroke-linejoin="round"/></svg>
<div class="t" id="t79" style="left:362.90px;top:303.00px;font-size:9.0px;color:#22252b;-webkit-text-stroke:0.28px #22252b;transform:scaleX(0.9400);transform-origin:0.00px 0">System must connect application</div>
<div class="a" style="left:556.4px;top:300.74px;width:30.20px;height:11.7px;background:#8fb8f6;border-radius:2.5px"></div>
<div class="t" id="t80" style="left:561.80px;top:303.00px;font-size:8.4px;color:#1c2b42;-webkit-text-stroke:0.28px #1c2b42;transform:scaleX(0.7753);transform-origin:0.00px 0;-webkit-text-stroke:0.3px #1c2b42">Ready</div>
<div class="t" id="t81" style="left:627.80px;top:302.00px;font-size:9.6px;color:#33353a;transform:scaleX(0.8700);transform-origin:0.00px 0">Frontend - Zathin</div>
<div class="a" style="left:717.1px;top:300.74px;width:37.00px;height:11.7px;background:#fff5c9;border-radius:2.5px"></div>
<div class="t" id="t82" style="left:722.50px;top:303.00px;font-size:8.4px;color:#7f5f01;-webkit-text-stroke:0.28px #7f5f01;transform:scaleX(0.8856);transform-origin:0.00px 0;-webkit-text-stroke:0.3px #7f5f01">Medium</div>
<div class="t" id="t83" style="left:789.00px;top:302.00px;font-size:8.4px;color:#505258">-</div>
<svg style="left:234.9px;top:322.56px" width="4.6" height="7.4" viewBox="0 0 4.6 7.4"><g fill="#1c2b41"><rect x="-.1" y="-.1" width="1.95" height="1.95" rx=".45"/><rect x="2.75" y="-.1" width="1.95" height="1.95" rx=".45"/><rect x="-.1" y="2.72" width="1.95" height="1.95" rx=".45"/><rect x="2.75" y="2.72" width="1.95" height="1.95" rx=".45"/><rect x="-.1" y="5.55" width="1.95" height="1.95" rx=".45"/><rect x="2.75" y="5.55" width="1.95" height="1.95" rx=".45"/></g></svg>
<div class="a" style="left:258.1px;top:320.96px;width:10.2px;height:10.2px;border:1.25px solid #6a97e8;border-radius:2px;background:#fff"></div>
<div class="t" id="t84" style="left:278.00px;top:323.00px;font-size:9.0px;color:#44506a;font-family:'Liberation Mono',monospace;transform:scaleX(0.8399);transform-origin:0.00px 0;-webkit-text-stroke:0.22px #44506a">PAKOS-REQ-53</div>
<svg style="left:348.1px;top:321.76px" width="9.9" height="8" viewBox="0 0 9.9 8"><path d="M4.95 1.5C4.5.95 3.8.75 2.8.75H1.7A.95.95 0 0 0 .75 1.7v4.2c0 .5.4.9.95.9h1.1c1 0 1.7.2 2.15.75.45-.55 1.15-.75 2.15-.75h1.1c.55 0 .95-.4.95-.9V1.7A.95.95 0 0 0 8.2.75H7.1C6.1.75 5.4.95 4.95 1.5zM4.95 1.5v6" fill="none" stroke="#a24ff0" stroke-width="1.4" stroke-linejoin="round"/></svg>
<div class="t" id="t85" style="left:362.90px;top:322.00px;font-size:9.0px;color:#22252b;-webkit-text-stroke:0.28px #22252b;transform:scaleX(0.9400);transform-origin:0.00px 0">System must compress interface</div>
<div class="a" style="left:556.4px;top:320.36px;width:27.60px;height:11.7px;background:#dddee1;border-radius:2.5px"></div>
<div class="t" id="t86" style="left:561.80px;top:323.00px;font-size:8.4px;color:#3b3e45;-webkit-text-stroke:0.28px #3b3e45;transform:scaleX(0.8926);transform-origin:0.00px 0;-webkit-text-stroke:0.3px #3b3e45">Draft</div>
<div class="t" id="t87" style="left:627.80px;top:321.00px;font-size:9.6px;color:#33353a;transform:scaleX(0.8700);transform-origin:0.00px 0">API - Tin</div>
<div class="a" style="left:717.1px;top:320.36px;width:37.00px;height:11.7px;background:#fff5c9;border-radius:2.5px"></div>
<div class="t" id="t88" style="left:722.50px;top:323.00px;font-size:8.4px;color:#7f5f01;-webkit-text-stroke:0.28px #7f5f01;transform:scaleX(0.8856);transform-origin:0.00px 0;-webkit-text-stroke:0.3px #7f5f01">Medium</div>
<div class="t" id="t89" style="left:789.00px;top:322.00px;font-size:8.4px;color:#505258">-</div>
<svg style="left:234.9px;top:342.18px" width="4.6" height="7.4" viewBox="0 0 4.6 7.4"><g fill="#1c2b41"><rect x="-.1" y="-.1" width="1.95" height="1.95" rx=".45"/><rect x="2.75" y="-.1" width="1.95" height="1.95" rx=".45"/><rect x="-.1" y="2.72" width="1.95" height="1.95" rx=".45"/><rect x="2.75" y="2.72" width="1.95" height="1.95" rx=".45"/><rect x="-.1" y="5.55" width="1.95" height="1.95" rx=".45"/><rect x="2.75" y="5.55" width="1.95" height="1.95" rx=".45"/></g></svg>
<div class="a" style="left:258.1px;top:340.58px;width:10.2px;height:10.2px;border:1.25px solid #6a97e8;border-radius:2px;background:#fff"></div>
<div class="t" id="t90" style="left:278.00px;top:343.00px;font-size:9.0px;color:#44506a;font-family:'Liberation Mono',monospace;transform:scaleX(0.8399);transform-origin:0.00px 0;-webkit-text-stroke:0.22px #44506a">PAKOS-REQ-41</div>
<svg style="left:348.1px;top:341.38px" width="9.9" height="8" viewBox="0 0 9.9 8"><path d="M4.95 1.5C4.5.95 3.8.75 2.8.75H1.7A.95.95 0 0 0 .75 1.7v4.2c0 .5.4.9.95.9h1.1c1 0 1.7.2 2.15.75.45-.55 1.15-.75 2.15-.75h1.1c.55 0 .95-.4.95-.9V1.7A.95.95 0 0 0 8.2.75H7.1C6.1.75 5.4.95 4.95 1.5zM4.95 1.5v6" fill="none" stroke="#a24ff0" stroke-width="1.4" stroke-linejoin="round"/></svg>
<div class="t" id="t91" style="left:362.90px;top:342.00px;font-size:9.0px;color:#22252b;-webkit-text-stroke:0.28px #22252b;transform:scaleX(0.9400);transform-origin:0.00px 0">System must navigate capacitor</div>
<div class="a" style="left:556.4px;top:339.98px;width:30.20px;height:11.7px;background:#8fb8f6;border-radius:2.5px"></div>
<div class="t" id="t92" style="left:561.80px;top:342.00px;font-size:8.4px;color:#1c2b42;-webkit-text-stroke:0.28px #1c2b42;transform:scaleX(0.7753);transform-origin:0.00px 0;-webkit-text-stroke:0.3px #1c2b42">Ready</div>
<div class="t" id="t93" style="left:627.80px;top:341.00px;font-size:9.6px;color:#33353a;transform:scaleX(0.8700);transform-origin:0.00px 0">No folder</div>
<div class="a" style="left:717.1px;top:339.98px;width:37.00px;height:11.7px;background:#fff5c9;border-radius:2.5px"></div>
<div class="t" id="t94" style="left:722.50px;top:342.00px;font-size:8.4px;color:#7f5f01;-webkit-text-stroke:0.28px #7f5f01;transform:scaleX(0.8856);transform-origin:0.00px 0;-webkit-text-stroke:0.3px #7f5f01">Medium</div>
<div class="t" id="t95" style="left:789.00px;top:342.00px;font-size:8.4px;color:#505258">-</div>
<svg style="left:234.9px;top:361.80px" width="4.6" height="7.4" viewBox="0 0 4.6 7.4"><g fill="#1c2b41"><rect x="-.1" y="-.1" width="1.95" height="1.95" rx=".45"/><rect x="2.75" y="-.1" width="1.95" height="1.95" rx=".45"/><rect x="-.1" y="2.72" width="1.95" height="1.95" rx=".45"/><rect x="2.75" y="2.72" width="1.95" height="1.95" rx=".45"/><rect x="-.1" y="5.55" width="1.95" height="1.95" rx=".45"/><rect x="2.75" y="5.55" width="1.95" height="1.95" rx=".45"/></g></svg>
<div class="a" style="left:258.1px;top:360.20px;width:10.2px;height:10.2px;border:1.25px solid #6a97e8;border-radius:2px;background:#fff"></div>
<div class="t" id="t96" style="left:278.00px;top:363.00px;font-size:9.0px;color:#44506a;font-family:'Liberation Mono',monospace;transform:scaleX(0.8399);transform-origin:0.00px 0;-webkit-text-stroke:0.22px #44506a">PAKOS-REQ-76</div>
<svg style="left:348.1px;top:361.00px" width="9.9" height="8" viewBox="0 0 9.9 8"><path d="M4.95 1.5C4.5.95 3.8.75 2.8.75H1.7A.95.95 0 0 0 .75 1.7v4.2c0 .5.4.9.95.9h1.1c1 0 1.7.2 2.15.75.45-.55 1.15-.75 2.15-.75h1.1c.55 0 .95-.4.95-.9V1.7A.95.95 0 0 0 8.2.75H7.1C6.1.75 5.4.95 4.95 1.5zM4.95 1.5v6" fill="none" stroke="#a24ff0" stroke-width="1.4" stroke-linejoin="round"/></svg>
<div class="t" id="t97" style="left:362.90px;top:362.00px;font-size:9.0px;color:#22252b;-webkit-text-stroke:0.28px #22252b;transform:scaleX(0.9400);transform-origin:0.00px 0">System must calculate interface</div>
<div class="a" style="left:556.4px;top:359.60px;width:30.20px;height:11.7px;background:#8fb8f6;border-radius:2.5px"></div>
<div class="t" id="t98" style="left:561.80px;top:362.00px;font-size:8.4px;color:#1c2b42;-webkit-text-stroke:0.28px #1c2b42;transform:scaleX(0.7753);transform-origin:0.00px 0;-webkit-text-stroke:0.3px #1c2b42">Ready</div>
<div class="t" id="t99" style="left:627.80px;top:361.00px;font-size:9.6px;color:#33353a;transform:scaleX(0.8700);transform-origin:0.00px 0">No folder</div>
<div class="a" style="left:717.1px;top:359.60px;width:52.50px;height:11.7px;background:#f0f1f3;border-radius:2.5px"></div>
<div class="t" id="t100" style="left:722.50px;top:362.00px;font-size:8.4px;color:#1f2b40;-webkit-text-stroke:0.28px #1f2b40;transform:scaleX(0.8202);transform-origin:0.00px 0;-webkit-text-stroke:0.3px #1f2b40">Not assessed</div>
<div class="t" id="t101" style="left:789.00px;top:361.00px;font-size:8.4px;color:#505258">-</div>
<svg style="left:234.9px;top:381.42px" width="4.6" height="7.4" viewBox="0 0 4.6 7.4"><g fill="#1c2b41"><rect x="-.1" y="-.1" width="1.95" height="1.95" rx=".45"/><rect x="2.75" y="-.1" width="1.95" height="1.95" rx=".45"/><rect x="-.1" y="2.72" width="1.95" height="1.95" rx=".45"/><rect x="2.75" y="2.72" width="1.95" height="1.95" rx=".45"/><rect x="-.1" y="5.55" width="1.95" height="1.95" rx=".45"/><rect x="2.75" y="5.55" width="1.95" height="1.95" rx=".45"/></g></svg>
<div class="a" style="left:258.1px;top:379.82px;width:10.2px;height:10.2px;border:1.25px solid #6a97e8;border-radius:2px;background:#fff"></div>
<div class="t" id="t102" style="left:278.00px;top:382.00px;font-size:9.0px;color:#44506a;font-family:'Liberation Mono',monospace;transform:scaleX(0.8399);transform-origin:0.00px 0;-webkit-text-stroke:0.22px #44506a">PAKOS-REQ-56</div>
<svg style="left:348.1px;top:380.62px" width="9.9" height="8" viewBox="0 0 9.9 8"><path d="M4.95 1.5C4.5.95 3.8.75 2.8.75H1.7A.95.95 0 0 0 .75 1.7v4.2c0 .5.4.9.95.9h1.1c1 0 1.7.2 2.15.75.45-.55 1.15-.75 2.15-.75h1.1c.55 0 .95-.4.95-.9V1.7A.95.95 0 0 0 8.2.75H7.1C6.1.75 5.4.95 4.95 1.5zM4.95 1.5v6" fill="none" stroke="#a24ff0" stroke-width="1.4" stroke-linejoin="round"/></svg>
<div class="t" id="t103" style="left:362.90px;top:381.00px;font-size:9.0px;color:#22252b;-webkit-text-stroke:0.28px #22252b;transform:scaleX(0.9400);transform-origin:0.00px 0">System must quantify system</div>
<div class="a" style="left:556.4px;top:379.22px;width:37.10px;height:11.7px;background:#a6d56f;border-radius:2.5px"></div>
<div class="t" id="t104" style="left:561.80px;top:382.00px;font-size:8.4px;color:#1d2e10;-webkit-text-stroke:0.28px #1d2e10;transform:scaleX(0.8219);transform-origin:0.00px 0;-webkit-text-stroke:0.3px #1d2e10">Covered</div>
<div class="t" id="t105" style="left:627.80px;top:380.00px;font-size:9.6px;color:#33353a;transform:scaleX(0.8700);transform-origin:0.00px 0">Frontend - Zathin</div>
<div class="a" style="left:717.1px;top:379.22px;width:52.50px;height:11.7px;background:#f0f1f3;border-radius:2.5px"></div>
<div class="t" id="t106" style="left:722.50px;top:382.00px;font-size:8.4px;color:#1f2b40;-webkit-text-stroke:0.28px #1f2b40;transform:scaleX(0.8202);transform-origin:0.00px 0;-webkit-text-stroke:0.3px #1f2b40">Not assessed</div>
<div class="t" id="t107" style="left:789.00px;top:381.00px;font-size:8.4px;color:#505258">-</div>
<svg style="left:234.9px;top:401.04px" width="4.6" height="7.4" viewBox="0 0 4.6 7.4"><g fill="#1c2b41"><rect x="-.1" y="-.1" width="1.95" height="1.95" rx=".45"/><rect x="2.75" y="-.1" width="1.95" height="1.95" rx=".45"/><rect x="-.1" y="2.72" width="1.95" height="1.95" rx=".45"/><rect x="2.75" y="2.72" width="1.95" height="1.95" rx=".45"/><rect x="-.1" y="5.55" width="1.95" height="1.95" rx=".45"/><rect x="2.75" y="5.55" width="1.95" height="1.95" rx=".45"/></g></svg>
<div class="a" style="left:258.1px;top:399.44px;width:10.2px;height:10.2px;border:1.25px solid #6a97e8;border-radius:2px;background:#fff"></div>
<div class="t" id="t108" style="left:278.00px;top:402.00px;font-size:9.0px;color:#44506a;font-family:'Liberation Mono',monospace;transform:scaleX(0.8399);transform-origin:0.00px 0;-webkit-text-stroke:0.22px #44506a">PAKOS-REQ-66</div>
<svg style="left:348.1px;top:400.24px" width="9.9" height="8" viewBox="0 0 9.9 8"><path d="M4.95 1.5C4.5.95 3.8.75 2.8.75H1.7A.95.95 0 0 0 .75 1.7v4.2c0 .5.4.9.95.9h1.1c1 0 1.7.2 2.15.75.45-.55 1.15-.75 2.15-.75h1.1c.55 0 .95-.4.95-.9V1.7A.95.95 0 0 0 8.2.75H7.1C6.1.75 5.4.95 4.95 1.5zM4.95 1.5v6" fill="none" stroke="#a24ff0" stroke-width="1.4" stroke-linejoin="round"/></svg>
<div class="t" id="t109" style="left:362.90px;top:401.00px;font-size:9.0px;color:#22252b;-webkit-text-stroke:0.28px #22252b;transform:scaleX(0.9400);transform-origin:0.00px 0">System must connect interface</div>
<div class="a" style="left:556.4px;top:398.84px;width:37.10px;height:11.7px;background:#a6d56f;border-radius:2.5px"></div>
<div class="t" id="t110" style="left:561.80px;top:401.00px;font-size:8.4px;color:#1d2e10;-webkit-text-stroke:0.28px #1d2e10;transform:scaleX(0.8219);transform-origin:0.00px 0;-webkit-text-stroke:0.3px #1d2e10">Covered</div>
<div class="t" id="t111" style="left:627.80px;top:400.00px;font-size:9.6px;color:#33353a;transform:scaleX(0.8700);transform-origin:0.00px 0">Security - Rank</div>
<div class="a" style="left:717.1px;top:398.84px;width:37.00px;height:11.7px;background:#fff5c9;border-radius:2.5px"></div>
<div class="t" id="t112" style="left:722.50px;top:401.00px;font-size:8.4px;color:#7f5f01;-webkit-text-stroke:0.28px #7f5f01;transform:scaleX(0.8856);transform-origin:0.00px 0;-webkit-text-stroke:0.3px #7f5f01">Medium</div>
<div class="t" id="t113" style="left:789.00px;top:400.00px;font-size:8.4px;color:#505258">-</div>
<svg style="left:234.9px;top:420.66px" width="4.6" height="7.4" viewBox="0 0 4.6 7.4"><g fill="#1c2b41"><rect x="-.1" y="-.1" width="1.95" height="1.95" rx=".45"/><rect x="2.75" y="-.1" width="1.95" height="1.95" rx=".45"/><rect x="-.1" y="2.72" width="1.95" height="1.95" rx=".45"/><rect x="2.75" y="2.72" width="1.95" height="1.95" rx=".45"/><rect x="-.1" y="5.55" width="1.95" height="1.95" rx=".45"/><rect x="2.75" y="5.55" width="1.95" height="1.95" rx=".45"/></g></svg>
<div class="a" style="left:258.1px;top:419.06px;width:10.2px;height:10.2px;border:1.25px solid #6a97e8;border-radius:2px;background:#fff"></div>
<div class="t" id="t114" style="left:278.00px;top:421.00px;font-size:9.0px;color:#44506a;font-family:'Liberation Mono',monospace;transform:scaleX(0.8399);transform-origin:0.00px 0;-webkit-text-stroke:0.22px #44506a">PAKOS-REQ-79</div>
<svg style="left:348.1px;top:419.86px" width="9.9" height="8" viewBox="0 0 9.9 8"><path d="M4.95 1.5C4.5.95 3.8.75 2.8.75H1.7A.95.95 0 0 0 .75 1.7v4.2c0 .5.4.9.95.9h1.1c1 0 1.7.2 2.15.75.45-.55 1.15-.75 2.15-.75h1.1c.55 0 .95-.4.95-.9V1.7A.95.95 0 0 0 8.2.75H7.1C6.1.75 5.4.95 4.95 1.5zM4.95 1.5v6" fill="none" stroke="#a24ff0" stroke-width="1.4" stroke-linejoin="round"/></svg>
<div class="t" id="t115" style="left:362.90px;top:420.00px;font-size:9.0px;color:#22252b;-webkit-text-stroke:0.28px #22252b;transform:scaleX(0.9400);transform-origin:0.00px 0">System must synthesize monitor</div>
<div class="a" style="left:556.4px;top:418.46px;width:37.10px;height:11.7px;background:#a6d56f;border-radius:2.5px"></div>
<div class="t" id="t116" style="left:561.80px;top:421.00px;font-size:8.4px;color:#1d2e10;-webkit-text-stroke:0.28px #1d2e10;transform:scaleX(0.8219);transform-origin:0.00px 0;-webkit-text-stroke:0.3px #1d2e10">Covered</div>
<div class="t" id="t117" style="left:627.80px;top:419.00px;font-size:9.6px;color:#33353a;transform:scaleX(0.8700);transform-origin:0.00px 0">E2E - Gembucket</div>
<div class="a" style="left:717.1px;top:418.46px;width:23.60px;height:11.7px;background:#dcfff1;border-radius:2.5px"></div>
<div class="t" id="t118" style="left:722.50px;top:421.00px;font-size:8.4px;color:#216e4e;-webkit-text-stroke:0.28px #216e4e;transform:scaleX(0.7968);transform-origin:0.00px 0;-webkit-text-stroke:0.3px #216e4e">Low</div>
<div class="t" id="t119" style="left:789.00px;top:420.00px;font-size:8.4px;color:#505258">-</div>
<svg style="left:234.9px;top:440.28px" width="4.6" height="7.4" viewBox="0 0 4.6 7.4"><g fill="#1c2b41"><rect x="-.1" y="-.1" width="1.95" height="1.95" rx=".45"/><rect x="2.75" y="-.1" width="1.95" height="1.95" rx=".45"/><rect x="-.1" y="2.72" width="1.95" height="1.95" rx=".45"/><rect x="2.75" y="2.72" width="1.95" height="1.95" rx=".45"/><rect x="-.1" y="5.55" width="1.95" height="1.95" rx=".45"/><rect x="2.75" y="5.55" width="1.95" height="1.95" rx=".45"/></g></svg>
<div class="a" style="left:258.1px;top:438.68px;width:10.2px;height:10.2px;border:1.25px solid #6a97e8;border-radius:2px;background:#fff"></div>
<div class="t" id="t120" style="left:278.00px;top:441.00px;font-size:9.0px;color:#44506a;font-family:'Liberation Mono',monospace;transform:scaleX(0.8381);transform-origin:0.00px 0;-webkit-text-stroke:0.22px #44506a">PAKOS-REQ-6</div>
<svg style="left:348.1px;top:439.48px" width="9.9" height="8" viewBox="0 0 9.9 8"><path d="M4.95 1.5C4.5.95 3.8.75 2.8.75H1.7A.95.95 0 0 0 .75 1.7v4.2c0 .5.4.9.95.9h1.1c1 0 1.7.2 2.15.75.45-.55 1.15-.75 2.15-.75h1.1c.55 0 .95-.4.95-.9V1.7A.95.95 0 0 0 8.2.75H7.1C6.1.75 5.4.95 4.95 1.5zM4.95 1.5v6" fill="none" stroke="#a24ff0" stroke-width="1.4" stroke-linejoin="round"/></svg>
<div class="t" id="t121" style="left:362.90px;top:440.00px;font-size:9.0px;color:#22252b;-webkit-text-stroke:0.28px #22252b;transform:scaleX(0.9400);transform-origin:0.00px 0">System must back up application</div>
<div class="a" style="left:556.4px;top:438.08px;width:37.10px;height:11.7px;background:#a6d56f;border-radius:2.5px"></div>
<div class="t" id="t122" style="left:561.80px;top:440.00px;font-size:8.4px;color:#1d2e10;-webkit-text-stroke:0.28px #1d2e10;transform:scaleX(0.8219);transform-origin:0.00px 0;-webkit-text-stroke:0.3px #1d2e10">Covered</div>
<div class="t" id="t123" style="left:627.80px;top:439.00px;font-size:9.6px;color:#33353a;transform:scaleX(0.8700);transform-origin:0.00px 0">No folder</div>
<div class="a" style="left:717.1px;top:438.08px;width:26.00px;height:11.7px;background:#fee5cf;border-radius:2.5px"></div>
<div class="t" id="t124" style="left:722.50px;top:440.00px;font-size:8.4px;color:#a54800;-webkit-text-stroke:0.28px #a54800;transform:scaleX(0.8767);transform-origin:0.00px 0;-webkit-text-stroke:0.3px #a54800">High</div>
<div class="t" id="t125" style="left:789.00px;top:440.00px;font-size:8.4px;color:#505258">-</div>
<svg style="left:234.9px;top:459.90px" width="4.6" height="7.4" viewBox="0 0 4.6 7.4"><g fill="#1c2b41"><rect x="-.1" y="-.1" width="1.95" height="1.95" rx=".45"/><rect x="2.75" y="-.1" width="1.95" height="1.95" rx=".45"/><rect x="-.1" y="2.72" width="1.95" height="1.95" rx=".45"/><rect x="2.75" y="2.72" width="1.95" height="1.95" rx=".45"/><rect x="-.1" y="5.55" width="1.95" height="1.95" rx=".45"/><rect x="2.75" y="5.55" width="1.95" height="1.95" rx=".45"/></g></svg>
<div class="a" style="left:258.1px;top:458.30px;width:10.2px;height:10.2px;border:1.25px solid #6a97e8;border-radius:2px;background:#fff"></div>
<div class="t" id="t126" style="left:278.00px;top:461.00px;font-size:9.0px;color:#44506a;font-family:'Liberation Mono',monospace;transform:scaleX(0.8399);transform-origin:0.00px 0;-webkit-text-stroke:0.22px #44506a">PAKOS-REQ-45</div>
<svg style="left:348.1px;top:459.10px" width="9.9" height="8" viewBox="0 0 9.9 8"><path d="M4.95 1.5C4.5.95 3.8.75 2.8.75H1.7A.95.95 0 0 0 .75 1.7v4.2c0 .5.4.9.95.9h1.1c1 0 1.7.2 2.15.75.45-.55 1.15-.75 2.15-.75h1.1c.55 0 .95-.4.95-.9V1.7A.95.95 0 0 0 8.2.75H7.1C6.1.75 5.4.95 4.95 1.5zM4.95 1.5v6" fill="none" stroke="#a24ff0" stroke-width="1.4" stroke-linejoin="round"/></svg>
<div class="t" id="t127" style="left:362.90px;top:460.00px;font-size:9.0px;color:#22252b;-webkit-text-stroke:0.28px #22252b;transform:scaleX(0.9400);transform-origin:0.00px 0">System must compress driver</div>
<div class="a" style="left:556.4px;top:457.70px;width:27.60px;height:11.7px;background:#dddee1;border-radius:2.5px"></div>
<div class="t" id="t128" style="left:561.80px;top:460.00px;font-size:8.4px;color:#3b3e45;-webkit-text-stroke:0.28px #3b3e45;transform:scaleX(0.8926);transform-origin:0.00px 0;-webkit-text-stroke:0.3px #3b3e45">Draft</div>
<div class="t" id="t129" style="left:627.80px;top:459.00px;font-size:9.6px;color:#33353a;transform:scaleX(0.8700);transform-origin:0.00px 0">Integration - Alphazap</div>
<div class="a" style="left:717.1px;top:457.70px;width:37.00px;height:11.7px;background:#fff5c9;border-radius:2.5px"></div>
<div class="t" id="t130" style="left:722.50px;top:460.00px;font-size:8.4px;color:#7f5f01;-webkit-text-stroke:0.28px #7f5f01;transform:scaleX(0.8856);transform-origin:0.00px 0;-webkit-text-stroke:0.3px #7f5f01">Medium</div>
<div class="t" id="t131" style="left:789.00px;top:459.00px;font-size:8.4px;color:#505258">-</div>
<svg style="left:234.9px;top:479.52px" width="4.6" height="7.4" viewBox="0 0 4.6 7.4"><g fill="#1c2b41"><rect x="-.1" y="-.1" width="1.95" height="1.95" rx=".45"/><rect x="2.75" y="-.1" width="1.95" height="1.95" rx=".45"/><rect x="-.1" y="2.72" width="1.95" height="1.95" rx=".45"/><rect x="2.75" y="2.72" width="1.95" height="1.95" rx=".45"/><rect x="-.1" y="5.55" width="1.95" height="1.95" rx=".45"/><rect x="2.75" y="5.55" width="1.95" height="1.95" rx=".45"/></g></svg>
<div class="a" style="left:258.1px;top:477.92px;width:10.2px;height:10.2px;border:1.25px solid #6a97e8;border-radius:2px;background:#fff"></div>
<div class="t" id="t132" style="left:278.00px;top:480.00px;font-size:9.0px;color:#44506a;font-family:'Liberation Mono',monospace;transform:scaleX(0.8381);transform-origin:0.00px 0;-webkit-text-stroke:0.22px #44506a">PAKOS-REQ-8</div>
<svg style="left:348.1px;top:478.72px" width="9.9" height="8" viewBox="0 0 9.9 8"><path d="M4.95 1.5C4.5.95 3.8.75 2.8.75H1.7A.95.95 0 0 0 .75 1.7v4.2c0 .5.4.9.95.9h1.1c1 0 1.7.2 2.15.75.45-.55 1.15-.75 2.15-.75h1.1c.55 0 .95-.4.95-.9V1.7A.95.95 0 0 0 8.2.75H7.1C6.1.75 5.4.95 4.95 1.5zM4.95 1.5v6" fill="none" stroke="#a24ff0" stroke-width="1.4" stroke-linejoin="round"/></svg>
<div class="t" id="t133" style="left:362.90px;top:479.00px;font-size:9.0px;color:#22252b;-webkit-text-stroke:0.28px #22252b;transform:scaleX(0.9400);transform-origin:0.00px 0">System must override matrix</div>
<div class="a" style="left:556.4px;top:477.32px;width:37.10px;height:11.7px;background:#a6d56f;border-radius:2.5px"></div>
<div class="t" id="t134" style="left:561.80px;top:480.00px;font-size:8.4px;color:#1d2e10;-webkit-text-stroke:0.28px #1d2e10;transform:scaleX(0.8219);transform-origin:0.00px 0;-webkit-text-stroke:0.3px #1d2e10">Covered</div>
<div class="t" id="t135" style="left:627.80px;top:478.00px;font-size:9.6px;color:#33353a;transform:scaleX(0.8700);transform-origin:0.00px 0">Frontend - Viva</div>
<div class="a" style="left:717.1px;top:477.32px;width:52.50px;height:11.7px;background:#f0f1f3;border-radius:2.5px"></div>
<div class="t" id="t136" style="left:722.50px;top:480.00px;font-size:8.4px;color:#1f2b40;-webkit-text-stroke:0.28px #1f2b40;transform:scaleX(0.8202);transform-origin:0.00px 0;-webkit-text-stroke:0.3px #1f2b40">Not assessed</div>
<div class="t" id="t137" style="left:789.00px;top:479.00px;font-size:8.4px;color:#505258">-</div>
<svg style="left:234.9px;top:499.14px" width="4.6" height="7.4" viewBox="0 0 4.6 7.4"><g fill="#1c2b41"><rect x="-.1" y="-.1" width="1.95" height="1.95" rx=".45"/><rect x="2.75" y="-.1" width="1.95" height="1.95" rx=".45"/><rect x="-.1" y="2.72" width="1.95" height="1.95" rx=".45"/><rect x="2.75" y="2.72" width="1.95" height="1.95" rx=".45"/><rect x="-.1" y="5.55" width="1.95" height="1.95" rx=".45"/><rect x="2.75" y="5.55" width="1.95" height="1.95" rx=".45"/></g></svg>
<div class="a" style="left:258.1px;top:497.54px;width:10.2px;height:10.2px;border:1.25px solid #6a97e8;border-radius:2px;background:#fff"></div>
<div class="t" id="t138" style="left:278.00px;top:500.00px;font-size:9.0px;color:#44506a;font-family:'Liberation Mono',monospace;transform:scaleX(0.8399);transform-origin:0.00px 0;-webkit-text-stroke:0.22px #44506a">PAKOS-REQ-74</div>
<svg style="left:348.1px;top:498.34px" width="9.9" height="8" viewBox="0 0 9.9 8"><path d="M4.95 1.5C4.5.95 3.8.75 2.8.75H1.7A.95.95 0 0 0 .75 1.7v4.2c0 .5.4.9.95.9h1.1c1 0 1.7.2 2.15.75.45-.55 1.15-.75 2.15-.75h1.1c.55 0 .95-.4.95-.9V1.7A.95.95 0 0 0 8.2.75H7.1C6.1.75 5.4.95 4.95 1.5zM4.95 1.5v6" fill="none" stroke="#a24ff0" stroke-width="1.4" stroke-linejoin="round"/></svg>
<div class="t" id="t139" style="left:362.90px;top:499.00px;font-size:9.0px;color:#22252b;-webkit-text-stroke:0.28px #22252b;transform:scaleX(0.9400);transform-origin:0.00px 0">System must input transmitter</div>
<div class="a" style="left:556.4px;top:496.94px;width:37.10px;height:11.7px;background:#a6d56f;border-radius:2.5px"></div>
<div class="t" id="t140" style="left:561.80px;top:499.00px;font-size:8.4px;color:#1d2e10;-webkit-text-stroke:0.28px #1d2e10;transform:scaleX(0.8219);transform-origin:0.00px 0;-webkit-text-stroke:0.3px #1d2e10">Covered</div>
<div class="t" id="t141" style="left:627.80px;top:498.00px;font-size:9.6px;color:#33353a;transform:scaleX(0.8700);transform-origin:0.00px 0">Security - Rank</div>
<div class="a" style="left:717.1px;top:496.94px;width:23.60px;height:11.7px;background:#dcfff1;border-radius:2.5px"></div>
<div class="t" id="t142" style="left:722.50px;top:499.00px;font-size:8.4px;color:#216e4e;-webkit-text-stroke:0.28px #216e4e;transform:scaleX(0.7968);transform-origin:0.00px 0;-webkit-text-stroke:0.3px #216e4e">Low</div>
<div class="t" id="t143" style="left:789.00px;top:498.00px;font-size:8.4px;color:#505258">-</div>
<svg style="left:234.9px;top:518.76px" width="4.6" height="7.4" viewBox="0 0 4.6 7.4"><g fill="#1c2b41"><rect x="-.1" y="-.1" width="1.95" height="1.95" rx=".45"/><rect x="2.75" y="-.1" width="1.95" height="1.95" rx=".45"/><rect x="-.1" y="2.72" width="1.95" height="1.95" rx=".45"/><rect x="2.75" y="2.72" width="1.95" height="1.95" rx=".45"/><rect x="-.1" y="5.55" width="1.95" height="1.95" rx=".45"/><rect x="2.75" y="5.55" width="1.95" height="1.95" rx=".45"/></g></svg>
<div class="a" style="left:258.1px;top:517.16px;width:10.2px;height:10.2px;border:1.25px solid #6a97e8;border-radius:2px;background:#fff"></div>
<div class="t" id="t144" style="left:278.00px;top:519.00px;font-size:9.0px;color:#44506a;font-family:'Liberation Mono',monospace;transform:scaleX(0.8399);transform-origin:0.00px 0;-webkit-text-stroke:0.22px #44506a">PAKOS-REQ-44</div>
<svg style="left:348.1px;top:517.96px" width="9.9" height="8" viewBox="0 0 9.9 8"><path d="M4.95 1.5C4.5.95 3.8.75 2.8.75H1.7A.95.95 0 0 0 .75 1.7v4.2c0 .5.4.9.95.9h1.1c1 0 1.7.2 2.15.75.45-.55 1.15-.75 2.15-.75h1.1c.55 0 .95-.4.95-.9V1.7A.95.95 0 0 0 8.2.75H7.1C6.1.75 5.4.95 4.95 1.5zM4.95 1.5v6" fill="none" stroke="#a24ff0" stroke-width="1.4" stroke-linejoin="round"/></svg>
<div class="t" id="t145" style="left:362.90px;top:518.00px;font-size:9.0px;color:#22252b;-webkit-text-stroke:0.28px #22252b;transform:scaleX(0.9400);transform-origin:0.00px 0">System must back up matrix</div>
<div class="a" style="left:556.4px;top:516.56px;width:27.60px;height:11.7px;background:#dddee1;border-radius:2.5px"></div>
<div class="t" id="t146" style="left:561.80px;top:519.00px;font-size:8.4px;color:#3b3e45;-webkit-text-stroke:0.28px #3b3e45;transform:scaleX(0.8926);transform-origin:0.00px 0;-webkit-text-stroke:0.3px #3b3e45">Draft</div>
<div class="t" id="t147" style="left:627.80px;top:517.00px;font-size:9.6px;color:#33353a;transform:scaleX(0.8700);transform-origin:0.00px 0">Frontend - Alphazap</div>
<div class="a" style="left:717.1px;top:516.56px;width:26.00px;height:11.7px;background:#fee5cf;border-radius:2.5px"></div>
<div class="t" id="t148" style="left:722.50px;top:519.00px;font-size:8.4px;color:#a54800;-webkit-text-stroke:0.28px #a54800;transform:scaleX(0.8767);transform-origin:0.00px 0;-webkit-text-stroke:0.3px #a54800">High</div>
<div class="t" id="t149" style="left:789.00px;top:518.00px;font-size:8.4px;color:#505258">-</div>
<svg style="left:957.8px;top:143px" width="6" height="4.3" viewBox="0 0 6 4.3"><path d="M3 0L6 4.3H0z" fill="#8a8a8a"/></svg>
<div class="a" style="left:958px;top:151px;width:5.4px;height:144px;border-radius:2.7px;background:#8e8e8e"></div>
<svg style="left:957.8px;top:524px" width="6" height="4.3" viewBox="0 0 6 4.3"><path d="M0 0H6L3 4.3z" fill="#8a8a8a"/></svg>
<div class="a" style="left:110.32px;top:230.6px;width:151.5px;height:27.2px;transform:rotate(-3.2deg);background:rgba(246,247,249,0.9);border:1px solid #a9c5f5;border-radius:2.5px;box-shadow:0 2px 3px rgba(0,0,0,0.08)"></div>
<div class="a" style="left:112.2px;top:225.3px;width:151.5px;height:27.2px;background:rgba(255,255,255,0.84);border:1.2px solid #4a86f0;border-radius:2.5px;box-shadow:0 3px 6px rgba(9,30,66,0.2)"></div>
<svg style="left:120.3px;top:235.2px" width="9.4" height="7.6" viewBox="0 0 9.8 7.8"><path d="M4.9 1.3C4.4.8 3.7.6 2.6.6H1.4C.9.6.6.9.6 1.4v4.5c0 .5.3.8.8.8h1.3c1 0 1.7.2 2.2.7.5-.5 1.2-.7 2.2-.7h1.3c.5 0 .8-.3.8-.8V1.4c0-.5-.3-.8-.8-.8H7.2C6.1.6 5.4.8 4.9 1.3zM4.9 1.3v6" fill="none" stroke="#b04cf0" stroke-width="1.1" stroke-linejoin="round"/></svg>
<div class="t" id="t150" style="left:134.30px;top:235.00px;font-size:9.2px;color:#4b4e56;-webkit-text-stroke:0.28px #4b4e56;transform:scaleX(0.9164);transform-origin:0.00px 0">System must navigate ar...</div>
<div class="a" style="left:239.2px;top:230.65px;width:16.3px;height:16.3px;border-radius:50%;background:#4b82ee"></div>
<div class="t" id="t151" style="left:244.90px;top:234.00px;font-size:9.6px;color:#fff;font-weight:bold;transform:scaleX(0.9800);transform-origin:0.00px 0">2</div>
<svg style="left:102.4px;top:220.6px" width="10" height="16.5" viewBox="0 0 10 16.5"><path d="M.5.5v9.2l2.1-1.9 1.6 3.4 1.3-.6-1.6-3.3h3z" fill="#fff" stroke="#2a2a2a" stroke-width=".9" stroke-linejoin="round"/><rect x="2.9" y="9.6" width="6.6" height="6.3" rx=".8" fill="#fff" stroke="#555" stroke-width=".9"/></svg>
<div class="a" style="left:23px;top:541px;width:952px;height:1px;background:#e6e7ea"></div>
<div class="btn" style="left:397.4px;top:544.1px;width:22px;height:16.3px;border-color:#eceef1"></div>
<svg style="left:405px;top:549px" width="6.2" height="6" viewBox="0 0 6.2 6"><path d="M6 3H.8M3 .6L.6 3 3 5.4" fill="none" stroke="#8d96a6" stroke-width="1.1" stroke-linejoin="round"/></svg>
<div class="t" id="t152" style="left:429.70px;top:548.00px;font-size:8.8px;color:#1f2b40;font-weight:bold;transform:scaleX(0.8657);transform-origin:0.00px 0">Page 1 of 2</div>
<div class="btn" style="left:479.8px;top:544.1px;width:22.5px;height:16.3px;border-color:#e6e8eb"></div>
<svg style="left:487.8px;top:549px" width="6.2" height="6" viewBox="0 0 6.2 6"><path d="M.2 3h5.2M3.2.6L5.6 3 3.2 5.4" fill="none" stroke="#1c2b42" stroke-width="1.2" stroke-linejoin="round"/></svg>
<div class="t" id="t153" style="left:869.90px;top:548.00px;font-size:9.0px;color:#6b6e76;transform:scaleX(0.9182);transform-origin:0.00px 0">Showing 1-50 of 100 items</div>
</body></html>
